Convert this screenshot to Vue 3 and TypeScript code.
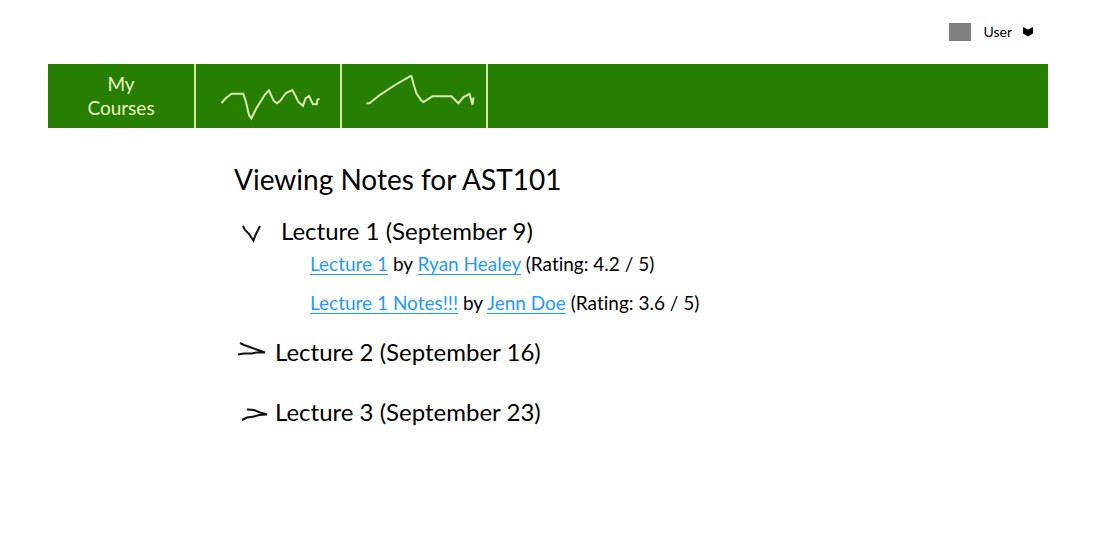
<script setup lang="ts">
import { ref } from 'vue'

interface Note {
  title: string
  author: string
  rating: string
}

interface Lecture {
  name: string
  open: boolean
  arrow: string
  notes: Note[]
}

const lectures = ref<Lecture[]>([
  {
    name: 'Lecture 1 (September 9)',
    open: true,
    arrow: 'M9 10L11 14L15 18L19.500 24.500L21.500 19L26 10',
    notes: [
      { title: 'Lecture 1', author: 'Ryan Healey', rating: '4.2' },
      { title: 'Lecture 1 Notes!!!', author: 'Jenn Doe', rating: '3.6' },
    ],
  },
  {
    name: 'Lecture 2 (September 16)',
    open: false,
    arrow: 'M6 6L10 8L17 10.500L24 13L31 15.500L22 15.500L18 16.500L10 16.500L4 17.500',
    notes: [],
  },
  {
    name: 'Lecture 3 (September 23)',
    open: false,
    arrow: 'M13 12.500L20 13L26 15.500L33 17.500L25 18L20 19.500L13 20.500L8 23',
    notes: [],
  },
])
</script>

<template>
  <div class="page">
    <header class="top">
      <button class="user" type="button">
        <span class="avatar"></span>
        <span>User</span>
        <svg class="caret" viewBox="0 0 12 10" aria-hidden="true">
          <path d="M1 0L6 2.500L11 0V6.500L6 9.500L1 6.500Z" />
        </svg>
      </button>
    </header>

    <nav class="bar">
      <a class="tab first" href="#">My<br />Courses</a>
      <a class="tab" href="#" aria-label="Second section">
        <svg viewBox="196 64 144 64" aria-hidden="true">
          <path d="M221.500 103L226 98L231.500 93.700H243.300L246 102L249 115L251.300 118.500L256.500 108L265 94.500L269 90.300L271 95L274 101L277 103.300L280 101L286 93L292.300 90L295 95L298.500 102L303 105.700L305.500 98.500L309 96L313 104.300H316.700L317.300 100L319.500 98.500" />
        </svg>
      </a>
      <a class="tab" href="#" aria-label="Third section">
        <svg viewBox="342 64 144 64" aria-hidden="true">
          <path d="M366.500 103.300H369.500L380 94.800L395 85L410 76.300H411.500L413.500 84L416.500 93.500L421 100L423.500 102L432.500 96.300H451.500L458.300 103.300L463.500 97L469.500 94L472.500 104.700L473.500 97.500" />
        </svg>
      </a>
    </nav>

    <main class="content">
      <h1>Viewing Notes for AST101</h1>
      <section v-for="(lecture, i) in lectures" :key="i" class="lecture" :class="{ expanded: lecture.open }">
        <h2>
          <button class="toggle" type="button" :aria-expanded="lecture.open" @click="lecture.open = !lecture.open">
            <svg viewBox="0 0 35 30" aria-hidden="true"><path :d="lecture.arrow" /></svg>
            <span>{{ lecture.name }}</span>
          </button>
        </h2>
        <ul v-if="lecture.open && lecture.notes.length">
          <li v-for="note in lecture.notes" :key="note.title">
            <a href="#">{{ note.title }}</a> by <a href="#">{{ note.author }}</a> (Rating: {{ note.rating }} / 5)
          </li>
        </ul>
      </section>
    </main>
  </div>
</template>

<style>
body {
  margin: 0;
  background: #fff;
}
</style>

<style scoped>
.page {
  padding: 0 49px 48px 48px;
  font-family: Lato, "Noto Sans", sans-serif;
  font-variant-ligatures: none;
  color: #000;
}

button {
  border: 0;
  padding: 0;
  background: none;
  font: inherit;
  font-variant-ligatures: none;
  color: inherit;
  cursor: pointer;
}

.top {
  display: flex;
  justify-content: flex-end;
  height: 64px;
  align-items: center;
  padding-right: 14px;
  box-sizing: border-box;
}

.user {
  display: flex;
  align-items: center;
  font-size: 14px;
  line-height: 18px;
}

.avatar {
  width: 22px;
  height: 18px;
  margin-right: 12px;
  background: #808080;
}

.caret {
  width: 12px;
  height: 10px;
  margin-left: 10px;
}

.bar {
  display: flex;
  min-height: 64px;
  background: #267f00;
}

.tab {
  display: flex;
  align-items: center;
  justify-content: center;
  width: 144px;
  border-right: 2px solid #d5e8a8;
  color: #eef5c4;
  font-size: 19px;
  line-height: 24px;
  text-align: center;
  text-decoration: none;
}

.first {
  width: 146px;
}

.tab svg {
  width: 144px;
  height: 64px;
  fill: none;
  stroke: #dcebb5;
  stroke-width: 2;
}

.content {
  padding: 32px 0 0 186px;
}

h1 {
  margin: 0 0 18px;
  font-size: 28px;
  font-weight: 400;
  line-height: 38px;
}

h2 {
  margin: 0;
  font-size: 24px;
  font-weight: 400;
}

.lecture {
  margin-bottom: 30px;
}

.lecture.expanded {
  margin-bottom: 22px;
}

.toggle {
  display: flex;
  align-items: center;
  gap: 6px;
  line-height: 30px;
}

.expanded .toggle {
  gap: 12px;
}

.toggle svg {
  width: 35px;
  height: 30px;
  fill: none;
  stroke: #111;
  stroke-width: 2;
}

ul {
  display: grid;
  gap: 15px;
  margin: 0;
  padding: 6px 0 0 76px;
  list-style: none;
}

li {
  font-size: 19px;
  line-height: 24px;
}

li a {
  color: #1e9bff;
  text-decoration-thickness: 1px;
  text-underline-offset: 3px;
}
</style>
